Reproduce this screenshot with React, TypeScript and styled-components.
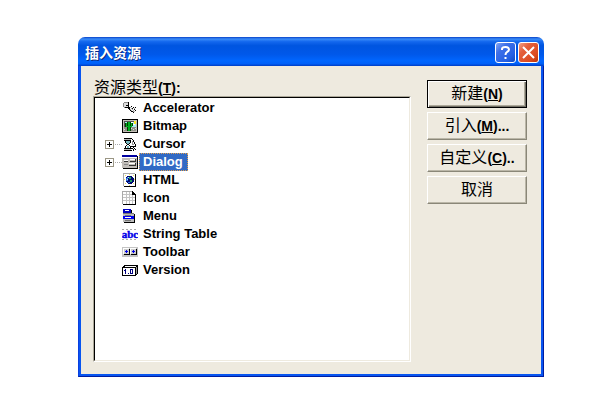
import React from "react";
import styled, { createGlobalStyle, css } from "styled-components";

const Global = createGlobalStyle`
  * { box-sizing: border-box; }
  body {
    margin: 0;
    background: #fff;
    color: #000;
    font-family: "Liberation Sans", "Noto Sans CJK SC", sans-serif;
  }
`;

const Page = styled.main`
  padding: 37px 70px 41px 78px;
`;

const Window = styled.section`
  border-radius: 7px 7px 0 0;
  overflow: hidden;
`;

const TitleBar = styled.header`
  display: flex;
  align-items: center;
  gap: 2px;
  height: 29px;
  padding: 2px 5px 0 7px;
  background: linear-gradient(
    #0842c8 0%,
    #3a8cf8 7%,
    #1468ee 16%,
    #0055e0 30%,
    #0058ea 60%,
    #0066ff 82%,
    #0060f8 92%,
    #003cc4 100%
  );
`;

const Title = styled.h1`
  flex: 1;
  margin: 0;
  color: #fff;
  font-size: 14px;
  line-height: 20px;
  font-weight: 700;
  text-shadow: 1px 1px 0 #0a2a80;
`;

const CaptionButton = styled.button<{ $close?: boolean }>`
  display: grid;
  place-items: center;
  width: 21px;
  height: 21px;
  padding: 0;
  border: 1px solid #fff;
  border-radius: 3px;
  background: ${(p) =>
    p.$close
      ? "linear-gradient(135deg, #f0a088 0%, #e4603c 30%, #dc4a20 75%, #b83408 100%)"
      : "linear-gradient(135deg, #88a8f4 0%, #3e70e8 30%, #2460e4 75%, #1048c0 100%)"};
`;

const Body = styled.div`
  display: flex;
  gap: 16px;
  padding: 12px 14px 12px 12px;
  background: #eeeadf;
  border: solid;
  border-width: 0 2px 2px;
  border-color: #0855f0;
`;

const Frame = styled.div`
  border: solid;
  border-width: 0 1px 1px;
  border-color: #001da0 #001da0 #001da0 #0a3fe0;
`;

const ListColumn = styled.div`
  flex: 1;
  min-width: 0;
`;

const ListLabel = styled.div`
  display: flex;
  align-items: center;
  height: 18px;
  padding: 2px 0 0 1px;
  font-size: 16px;
  line-height: 18px;
`;

const Latin = styled.span`
  font-size: 14px;
  font-weight: 700;
`;

const Sunken = styled.div`
  border: 1px solid;
  border-color: #aca899 #fff #fff #aca899;
`;

const Tree = styled.ul`
  height: 264px;
  margin: 0;
  padding: 1px 0 0 10px;
  list-style: none;
  background: #fff;
  border: 1px solid;
  border-color: #000 #eeeadf #eeeadf #000;
`;

const Row = styled.li`
  display: flex;
  align-items: center;
  height: 18px;
`;

const Twig = styled.span`
  display: flex;
  align-items: center;
  flex: none;
  width: 17px;
`;

const Expander = styled.button`
  display: grid;
  place-items: center;
  width: 9px;
  height: 9px;
  padding: 0;
  border: 1px solid #9a9684;
  background: #fff;
`;

const Dots = styled.span`
  flex: 1;
  height: 1px;
  margin-left: 1px;
  background: repeating-linear-gradient(90deg, #aaa 0 1px, transparent 1px 2px);
`;

const IconBox = styled.svg`
  flex: none;
  width: 16px;
  height: 16px;
  margin-right: 1px;
`;

const Name = styled.span<{ $selected?: boolean }>`
  height: 18px;
  padding: 0 4px 0 3px;
  border: 1px dotted transparent;
  font-size: 13px;
  line-height: 16px;
  font-weight: 700;
  ${(p) =>
    p.$selected &&
    css`
      color: #fff;
      background: #316ac5;
      border-color: #e0a050;
    `}
`;

const Actions = styled.div`
  display: flex;
  flex-direction: column;
  gap: 4px;
  width: 100px;
  padding-top: 2px;
`;

const Action = styled.button<{ $primary?: boolean }>`
  display: flex;
  align-items: center;
  justify-content: center;
  height: 28px;
  padding: 0;
  color: #000;
  background: #eeeadf;
  font-family: inherit;
  font-size: 16px;
  line-height: 18px;
  border: 1px solid;
  ${(p) =>
    p.$primary
      ? css`
          border-color: #000;
          box-shadow: inset 1px 1px 0 #fff, inset -1px -1px 0 #716f64, inset -2px -2px 0 #aca899;
        `
      : css`
          border-color: #fff #8a8778 #8a8778 #fff;
          box-shadow: inset -1px -1px 0 #bbb7a8;
        `}
`;

const art: Record<string, React.ReactNode> = {
  Accelerator: (
    <>
      <path fill="#888" d="M2 2h5v1H2zM1 3h1v4H1zM2 7h2v1H2z" />
      <path fill="#ddd" d="M2 3h4v4H2z" />
      <path fill="#000" d="M6 2h1v5H6zM3 7h4v1H3zM4 5h2v1H4zM7 7h1v1H7zM6 8h2v1H6zM7 9h1v1H7zM8 10h1v1H8zM9 11h2v1H9zM11 12h1v1h-1zM9 6h1v1H9zM11 7h1v1h-1zM13 7h1v1h-1zM10 8h1v1h-1zM12 9h1v1h-1zM13 10h1v1h-1z" />
      <path fill="#aaa" d="M8 7h1v1H8zM9 8h1v1H9zM8 9h1v1H8zM10 9h1v1h-1zM9 10h1v1H9zM11 10h1v1h-1zM12 8h1v1h-1zM11 11h2v1h-2z" />
    </>
  ),
  Bitmap: (
    <>
      <path fill="#000" d="M0 1h16v14H0z" />
      <path fill="#c4c0b8" d="M1 2h14v12H1z" />
      <path fill="#555" d="M2 3h12v10H2z" />
      <path fill="#a8ecf4" d="M3 4h11v5H3z" />
      <path fill="#fff" d="M9 4h2v1H9zM10 6h3v1h-3z" />
      <path fill="#909088" d="M2 9h12v4H2z" />
      <path fill="#ddd" d="M9 10h1v1H9zM11 11h1v1h-1zM13 10h1v1h-1zM2 11h1v1H2z" />
      <path fill="#ffe820" d="M12 3h2v3h-2z" />
      <path fill="#004000" d="M3 5h1v4H3zM5 4h1v9H5zM8 4h1v9H8zM10 5h1v3h-1z" />
      <path fill="#00b020" d="M6 4h2v9H6zM4 5h1v3H4zM4 8h2v1H4zM8 8h2v1H8zM9 5h1v3H9z" />
    </>
  ),
  Cursor: (
    <>
      <path fill="#000" d="M2 2h8v1H2zM2 4h7v1H2zM2 12h8v1H2zM2 14h8v1H2zM3 5h1v2H3zM8 5h1v2H8zM4 7h1v1H4zM7 7h1v1H7zM5 8h2v1H5zM4 9h1v1H4zM7 9h1v1H7zM3 10h1v2H3zM8 10h1v2H8z" />
      <path fill="#bbb" d="M2 3h7v1H2zM2 13h7v1H2z" />
      <path fill="#78b8c0" d="M4 5h4v2H4zM5 7h2v1H5zM5 10h2v2H5z" />
      <path fill="#000" d="M10 3h1v1h-1zM11 4h1v2h-1zM12 6h1v2h-1zM13 8h1v2h-1zM9 10h5v1H9zM11 11h1v1h-1zM12 12h1v1h-1zM13 13h1v1h-1zM10 12h1v1h-1zM11 13h1v2h-1z" />
      <path fill="#999" d="M10 5h1v4h-1zM11 8h1v1h-1z" />
    </>
  ),
  Dialog: (
    <>
      <path fill="#000" d="M1 2h15v13H1z" />
      <path fill="#c0bcb8" d="M0 2h15v12H0z" />
      <path fill="#0000a0" d="M0 1h15v2H0z" />
      <path fill="#fff" d="M0 3h15v1H0zM2 6h4v1H2zM8 5h5v1H8zM7 9h6v1H7z" />
      <path fill="#333" d="M2 7h4v1H2zM8 7h5v1H8zM13 5h1v3h-1zM7 11h6v1H7zM13 9h1v3h-1z" />
      <path fill="#888" d="M2 10h4v1H2z" />
    </>
  ),
  HTML: (
    <>
      <path fill="#000" d="M2 2h12v13H2z" />
      <path fill="#aaa" d="M1 1h12v13H1z" />
      <path fill="#fff" d="M2 2h11v12H2z" />
      <path fill="#f0e060" d="M3 3h1v1H3zM7 2h1v1H7zM11 3h1v1h-1zM2 7h1v1H2zM12 7h1v1h-1zM3 11h1v1H3zM11 11h1v1h-1zM7 13h1v1H7z" />
      <path fill="#000a70" d="M5 4h5v1h1v1h1v4h-1v1h-1v1H6v-1H5v-1H4V5h1z" />
      <path fill="#3070e0" d="M5 5h2v1H5zM4 6h2v3H4zM6 10h2v1H6z" />
      <path fill="#20a060" d="M7 5h2v2H7zM8 8h2v2H8z" />
      <path fill="#b0e0f8" d="M6 5h1v1H6zM5 7h1v1H5z" />
    </>
  ),
  Icon: (
    <>
      <path fill="#aaa" d="M0 1h11v1H0zM0 2h1v12H0z" />
      <path fill="#000" d="M10 1h1v1h1v1h1v1h1v11H1v-1h12V5h-3z" />
      <path fill="#fff" d="M1 2h9v3h3v9H1z" />
      <path fill="#c4c4c4" d="M4 2h1v12H4zM7 2h1v12H7zM10 5h1v9h-1zM1 4h9v1H1zM1 7h12v1H1zM1 10h12v1H1z" />
    </>
  ),
  Menu: (
    <>
      <path fill="#0000c0" d="M1 1h8v4H1z" />
      <path fill="#fff" d="M3 2h4v1H3z" />
      <path fill="#000" d="M9 2h1v3H9zM2 14h11v1H2zM12 6h1v9h-1z" />
      <path fill="#bbb" d="M1 5h11v9H1z" />
      <path fill="#777" d="M1 5h11v1H1zM3 7h6v1H3zM3 12h6v1H3z" />
      <path fill="#0000f0" d="M1 8h11v3H1z" />
      <path fill="#fff" d="M3 9h6v1H3z" />
    </>
  ),
  "String Table": (
    <>
      <path stroke="#aaa" strokeDasharray="2 2" d="M0 3.5h16M0 13.5h16" />
      <text x="8" y="12" textAnchor="middle" fill="#0000e8" fontFamily="Liberation Serif, serif" fontWeight="700" fontSize="11" stroke="#0000e8" strokeWidth="0.4">abc</text>
    </>
  ),
  Toolbar: (
    <>
      <path fill="#c4c4c4" d="M0 3h16v10H0z" />
      <path fill="#fff" d="M1 4h6v6H1zM8 4h6v6H8z" />
      <path fill="#ccc" d="M2 5h5v5H2zM9 5h5v5H9z" />
      <path fill="#000" d="M7 5h1v6H7zM2 10h6v1H2zM14 5h1v6h-1zM9 10h6v1H9z" />
      <path fill="#0000e8" d="M4 6h1v1h1v1H5v1H4V8H3V7h1zM11 6h1v1h1v1h-1v1h-1V8h-1V7h1z" />
    </>
  ),
  Version: (
    <>
      <path fill="#000" d="M2 3h14v9h-1v1h-1v1H0V5h1V4h1z" />
      <path fill="#fff" d="M3 4h11v1H3zM1 6h12v7H1z" />
      <path fill="#999" d="M14 5h1v7h-1z" />
      <path fill="#000080" d="M3 7h1v5H3zM2 8h1v1H2zM6 11h1v1H6zM8 7h3v1H8zM8 8h1v3H8zM10 8h1v3h-1zM8 11h3v1H8z" />
    </>
  ),
};

const resources = [
  { name: "Accelerator" },
  { name: "Bitmap" },
  { name: "Cursor", expandable: true },
  { name: "Dialog", expandable: true, selected: true },
  { name: "HTML" },
  { name: "Icon" },
  { name: "Menu" },
  { name: "String Table" },
  { name: "Toolbar" },
  { name: "Version" },
];

const actions = [
  { text: "新建", mnemonic: "N", tail: "" },
  { text: "引入", mnemonic: "M", tail: "..." },
  { text: "自定义", mnemonic: "C", tail: ".." },
  { text: "取消" },
];

function Mnemonic({ letter, tail }: { letter: string; tail?: string }) {
  return (
    <Latin>
      (<u>{letter}</u>){tail}
    </Latin>
  );
}

export default function App() {
  return (
    <Page>
      <Global />
      <Window role="dialog" aria-labelledby="dialog-title">
        <TitleBar>
          <Title id="dialog-title">插入资源</Title>
          <CaptionButton aria-label="帮助">
            <svg width="13" height="15" viewBox="0 0 13 15" fill="none" stroke="#fff" strokeWidth="2">
              <path d="M3 5V4Q3 2 6.500 2T10 4.500Q10 6 8 7Q6.500 8 6.500 10M6.500 12v2" />
            </svg>
          </CaptionButton>
          <CaptionButton $close aria-label="关闭">
            <svg width="13" height="13" viewBox="0 0 13 13" stroke="#fff" strokeWidth="2">
              <path d="M1 1l11 11M12 1L1 12" />
            </svg>
          </CaptionButton>
        </TitleBar>
        <Frame>
          <Body>
            <ListColumn>
              <ListLabel id="list-label">
                资源类型
                <Mnemonic letter="T" tail=":" />
              </ListLabel>
              <Sunken>
                <Tree role="tree" aria-labelledby="list-label">
                  {resources.map((r) => (
                    <Row key={r.name} role="treeitem" aria-selected={!!r.selected}>
                      <Twig>
                        {r.expandable && (
                          <>
                            <Expander aria-label={`展开 ${r.name}`}>
                              <svg width="5" height="5" viewBox="0 0 5 5" shapeRendering="crispEdges">
                                <path d="M2 0h1v5H2zM0 2h5v1H0z" />
                              </svg>
                            </Expander>
                            <Dots />
                          </>
                        )}
                      </Twig>
                      <IconBox viewBox="0 0 16 16" shapeRendering="crispEdges" aria-hidden="true">
                        {art[r.name]}
                      </IconBox>
                      <Name $selected={r.selected}>{r.name}</Name>
                    </Row>
                  ))}
                </Tree>
              </Sunken>
            </ListColumn>
            <Actions>
              {actions.map((a, i) => (
                <Action key={a.text} $primary={i === 0}>
                  {a.text}
                  {a.mnemonic && <Mnemonic letter={a.mnemonic} tail={a.tail} />}
                </Action>
              ))}
            </Actions>
          </Body>
        </Frame>
      </Window>
    </Page>
  );
}
